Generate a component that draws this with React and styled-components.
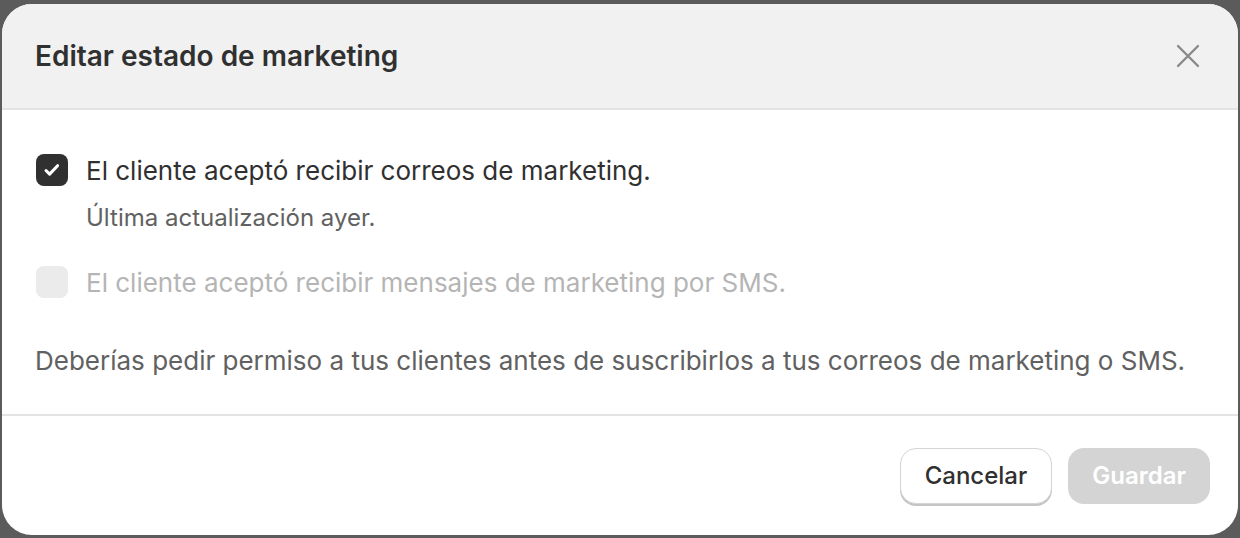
import styled, { createGlobalStyle } from "styled-components";

const GlobalStyle = createGlobalStyle`
  html, body {
    margin: 0;
    padding: 0;
    background: #5b5b5b;
    font-family: Inter, "Noto Sans", "Liberation Sans", sans-serif;
    -webkit-font-smoothing: antialiased;
  }
`;

const Backdrop = styled.div`
  width: 1240px;
  height: 538px;
  box-sizing: border-box;
  padding: 4px 2px 3px 2px;
  background: #5b5b5b;
`;

const Modal = styled.div`
  height: 100%;
  display: flex;
  flex-direction: column;
  background: #ffffff;
  border-radius: 30px;
  overflow: hidden;
`;

const Header = styled.div`
  height: 104px;
  flex-shrink: 0;
  display: flex;
  align-items: center;
  justify-content: space-between;
  padding: 0 28px 0 33px;
  background: #f1f1f1;
  border-bottom: 2px solid #e3e3e3;
`;

const Title = styled.h2`
  margin: 0;
  font-size: 28px;
  font-weight: 600;
  color: #303030;
`;

const CloseButton = styled.button`
  width: 44px;
  height: 44px;
  display: flex;
  align-items: center;
  justify-content: center;
  border: 0;
  padding: 0;
  background: transparent;
  cursor: pointer;
`;

const Body = styled.div`
  flex: 1;
  padding: 44px 33px 0 34px;
  border-bottom: 2px solid #e3e3e3;
`;

const Option = styled.label`
  display: flex;
  align-items: center;
  gap: 18px;
  height: 32px;
  font-size: 26px;
  color: ${(p) => (p.disabled ? "#b5b5b5" : "#303030")};
`;

const Box = styled.span`
  width: 32px;
  height: 32px;
  flex-shrink: 0;
  display: flex;
  border-radius: 8px;
  background: ${(p) => (p.checked ? "#303030" : "#ebebeb")};
`;

const Hint = styled.div`
  margin: 16px 0 32px 50px;
  font-size: 24px;
  line-height: 32px;
  color: #616161;
`;

const Note = styled.p`
  margin: 47px 0 0 -1px;
  font-size: 26px;
  line-height: 32px;
  color: #616161;
`;

const Footer = styled.div`
  height: 119px;
  flex-shrink: 0;
  display: flex;
  align-items: center;
  justify-content: flex-end;
  gap: 16px;
  padding: 0 28px;
`;

const Button = styled.button`
  height: 56px;
  padding: 0 24px;
  border-radius: 16px;
  font-family: inherit;
  font-size: 24px;
  font-weight: 500;
  cursor: pointer;
  ${(p) =>
    p.primary
      ? `
    background: #d4d4d4;
    color: #ffffff;
    border: 0;
    font-weight: 600;
  `
      : `
    background: #ffffff;
    color: #303030;
    border: 1.5px solid #d4d4d4;
    box-shadow: 0 2px 0 #c4c4c4;
  `}
`;

function Checkbox({ checked, disabled, children }) {
  return (
    <Option disabled={disabled}>
      <Box checked={checked}>
        {checked && (
          <svg width="32" height="32" viewBox="0 0 32 32" fill="none">
            <path
              d="M10 16.5l3.6 3.6 8-8.4"
              stroke="#fff"
              strokeWidth="3"
              strokeLinecap="round"
              strokeLinejoin="round"
            />
          </svg>
        )}
      </Box>
      {children}
    </Option>
  );
}

export default function App() {
  return (
    <Backdrop>
      <GlobalStyle />
      <Modal>
        <Header>
          <Title>Editar estado de marketing</Title>
          <CloseButton aria-label="Cerrar">
            <svg width="24" height="24" viewBox="0 0 24 24" fill="none">
              <path
                d="M2 2l20 20M22 2L2 22"
                stroke="#8a8a8a"
                strokeWidth="2.4"
                strokeLinecap="round"
              />
            </svg>
          </CloseButton>
        </Header>
        <Body>
          <Checkbox checked>El cliente aceptó recibir correos de marketing.</Checkbox>
          <Hint>Última actualización ayer.</Hint>
          <Checkbox disabled>
            El cliente aceptó recibir mensajes de marketing por SMS.
          </Checkbox>
          <Note>
            Deberías pedir permiso a tus clientes antes de suscribirlos a tus
            correos de marketing o SMS.
          </Note>
        </Body>
        <Footer>
          <Button>Cancelar</Button>
          <Button primary>Guardar</Button>
        </Footer>
      </Modal>
    </Backdrop>
  );
}
